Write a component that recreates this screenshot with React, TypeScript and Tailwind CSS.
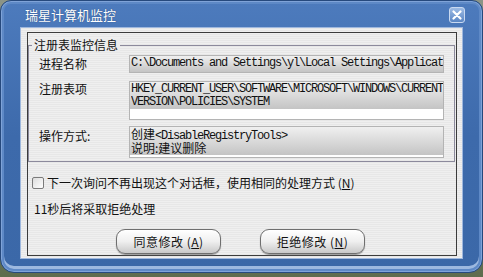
import React from "react";

const cjk = "font-['SimSun','Noto_Sans_CJK_SC',sans-serif]";
const mono = "font-['Liberation_Mono','Noto_Sans_CJK_SC',monospace]";

function Field({ lines, grayH, totalH }: { lines: string[]; grayH: number; totalH: number }) {
  return (
    <div className="flex flex-col border border-[#b4b4b4] bg-white" style={{ height: totalH }}>
      <div
        className="flex flex-col pl-[1px] pt-[1px] bg-gradient-to-b from-[#f0f0f0] to-[#c4c4c4]"
        style={{ height: grayH }}
      >
        {lines.map((l, i) => (
          <div
            key={i}
            className={`${mono} text-[12px] leading-[12.5px] tracking-[-1.2px] text-[#111] whitespace-nowrap overflow-hidden`}
          >
            {l}
          </div>
        ))}
      </div>
    </div>
  );
}

function Button({ label, mnemonic }: { label: string; mnemonic: string }) {
  return (
    <button className="w-[105px] h-[25px] rounded-[9px] border border-[#6f6f6f] bg-gradient-to-b from-[#ffffff] via-[#efefef] to-[#c9c9c9] shadow-[inset_0_1px_0_#ffffff,0_1px_1px_#9a9a9a] flex items-center justify-center">
      <span className={`${cjk} text-[12px] text-[#111] tracking-[0.5px]`}>
        {label} (<span className="underline">{mnemonic}</span>)
      </span>
    </button>
  );
}

export default function App() {
  return (
    <div className="w-[483px] h-[277px] bg-gradient-to-b from-[#8c9487] to-[#5f6c4d] overflow-hidden">
      <div className="w-[483px] h-[273px] rounded-t-[11px] rounded-b-[14px] border border-[#26497d] bg-gradient-to-b from-[#4d7bbd] via-[#3d6aab] to-[#3b68a8] shadow-[inset_0_0_0_1px_#7fa3d8,inset_0_0_0_3px_#5e89c6,inset_0_-3px_0_3px_#9db9e0] flex flex-col">
        {/* title bar */}
        <div className="h-[26px] flex items-center justify-between pl-[24px] pr-[17px] pt-[1px]">
          <span className={`${cjk} text-[13px] text-white [text-shadow:0_0_1px_#1d3e70]`}>瑞星计算机监控</span>
          <div className="w-[16px] h-[16px] rounded-[3px] border border-[#c9d9f1] bg-gradient-to-b from-[#9dbbe4] to-[#5a86c4] flex items-center justify-center">
            <svg width="10" height="10" viewBox="0 0 10 10">
              <path d="M1.5 1.5 L8.5 8.5 M8.5 1.5 L1.5 8.5" stroke="white" strokeWidth="2.2" strokeLinecap="round" />
            </svg>
          </div>
        </div>

        {/* client area */}
        <div className="mx-[19px] h-[232px] border border-[#9fb8de] bg-[repeating-linear-gradient(0deg,#efefef_0px,#efefef_1px,#e7e7e7_1px,#e7e7e7_2px)] px-[6px] pt-[4px] pb-[2px] flex">
          <div className="flex-1 border border-[#3c3c3c] flex flex-col">
            {/* group box */}
            <div className="relative mt-[12px] mr-[1px] h-[117px] border border-[#8c8a9c] flex flex-col pl-[10px] pr-[10px] pt-[9px]">
              <span className={`absolute left-[3px] top-[-8px] px-[2px] bg-[#ececec] ${cjk} text-[12px] leading-[14px] text-[#111]`}>
                注册表监控信息
              </span>
              <div className="flex items-center">
                <span className={`w-[90px] ${cjk} text-[12px] text-[#111]`}>进程名称</span>
                <div className="flex-1">
                  <Field lines={["C:\\Documents and Settings\\yl\\Local Settings\\Applicat"]} grayH={16} totalH={18} />
                </div>
              </div>
              <div className="flex items-start mt-[8px]">
                <span className={`w-[90px] ${cjk} text-[12px] leading-[14px] pt-[1px] text-[#111]`}>注册表项</span>
                <div className="flex-1">
                  <Field
                    lines={["HKEY_CURRENT_USER\\SOFTWARE\\MICROSOFT\\WINDOWS\\CURRENT", "VERSION\\POLICIES\\SYSTEM"]}
                    grayH={27}
                    totalH={39}
                  />
                </div>
              </div>
              <div className="flex items-start mt-[6px]">
                <span className={`w-[90px] ${cjk} text-[12px] leading-[14px] pt-[3px] text-[#111]`}>操作方式:</span>
                <div className="flex-1 h-[32px] border border-[#b4b4b4] bg-white flex flex-col">
                  <div className={`h-[28px] pl-[1px] bg-gradient-to-b from-[#f0f0f0] to-[#c4c4c4] ${cjk} text-[12px] text-[#111]`}>
                    <div className="h-[14px] leading-[14px]">
                      创建<span className={`${mono} tracking-[-1.2px]`}>&lt;DisableRegistryTools&gt;</span>
                    </div>
                    <div className="h-[14px] leading-[14px]">说明:建议删除</div>
                  </div>
                </div>
              </div>
            </div>

            {/* checkbox */}
            <div className="flex items-center mt-[12px] pl-[4px]">
              <div className="w-[12px] h-[12px] rounded-[2px] border border-[#7b7b7b] bg-gradient-to-br from-[#dcdcdc] to-white" />
              <span className={`ml-[3px] ${cjk} text-[12px] text-[#111]`}>
                下一次询问不再出现这个对话框，使用相同的处理方式 (<span className="underline">N</span>)
              </span>
            </div>

            <div className={`mt-[8px] pl-[6px] ${cjk} text-[12px] text-[#111]`}>11秒后将采取拒绝处理</div>

            <div className="mt-[11px] pl-[88px] flex gap-[39px]">
              <Button label="同意修改" mnemonic="A" />
              <Button label="拒绝修改" mnemonic="N" />
            </div>
          </div>
        </div>
      </div>
    </div>
  );
}
